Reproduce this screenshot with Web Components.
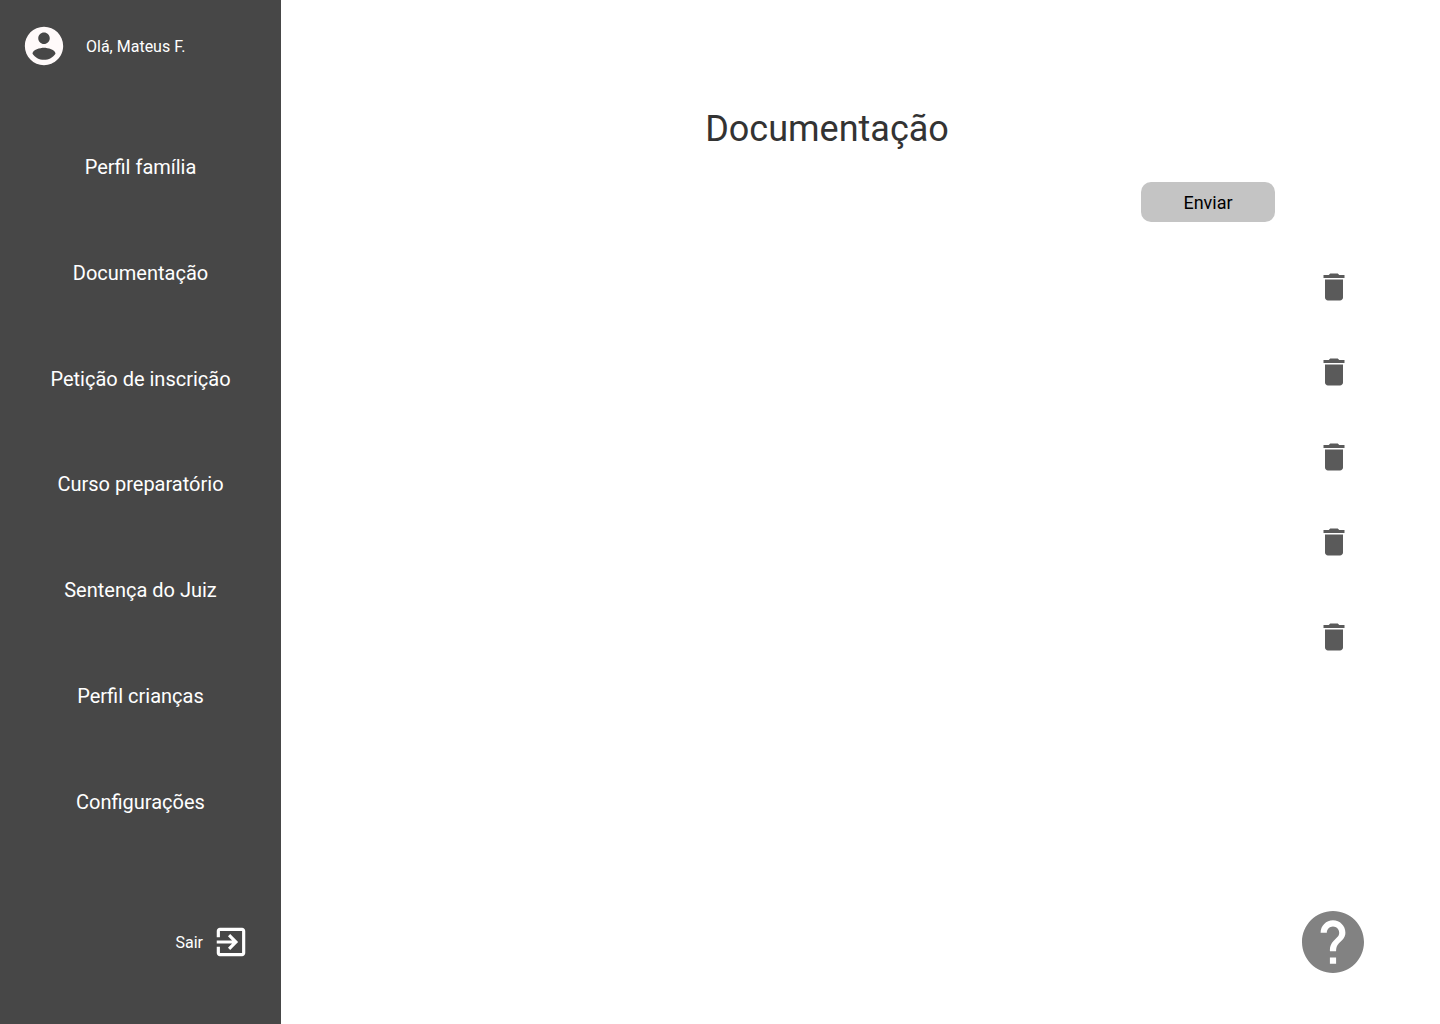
<!DOCTYPE html>
<html lang="pt-BR">
<head>
<meta charset="utf-8">
<title>Documentação</title>
<style>
  body { margin: 0; background: #fff; font-family: Roboto, "Liberation Sans", sans-serif; }
</style>
</head>
<body>
<app-shell>
  <side-bar slot="side" user="Olá, Mateus F.">
    <nav-item>Perfil família</nav-item>
    <nav-item>Documentação</nav-item>
    <nav-item>Petição de inscrição</nav-item>
    <nav-item>Curso preparatório</nav-item>
    <nav-item>Sentença do Juiz</nav-item>
    <nav-item>Perfil crianças</nav-item>
    <nav-item>Configurações</nav-item>
  </side-bar>
  <documents-page heading="Documentação">
    <send-button slot="action">Enviar</send-button>
    <document-row></document-row>
    <document-row></document-row>
    <document-row></document-row>
    <document-row></document-row>
    <document-row last></document-row>
    <help-button slot="help"></help-button>
  </documents-page>
</app-shell>
<script>
class BaseElement extends HTMLElement {
  constructor() {
    super();
    this.attachShadow({ mode: 'open' }).innerHTML =
      '<style>*{box-sizing:border-box}button{font:inherit;border:0;padding:0;background:none;cursor:pointer}a{color:inherit;text-decoration:none}svg{display:block;fill:currentColor}</style>' + this.template();
  }
}

customElements.define('app-shell', class extends BaseElement {
  template() {
    return `<style>
      :host { display: grid; grid-template-columns: 281px 1fr; min-height: 100vh; }
    </style><slot name="side"></slot><slot></slot>`;
  }
});

customElements.define('side-bar', class extends BaseElement {
  template() {
    return `<style>
      :host { display: flex; flex-direction: column; background: #474747; color: #fff; }
      header { display: flex; align-items: center; gap: 19px; height: 92px; padding-left: 21px; font-size: 16px; line-height: 20px; }
      header svg { width: 46px; height: 46px; color: #fffafa; }
      span { padding-top: 2px; }
      nav { flex: 1; display: flex; flex-direction: column; justify-content: space-between; padding: 63px 0 109px; }
      footer { display: flex; justify-content: flex-end; padding: 0 31px 63px 0; }
      a { display: flex; align-items: center; gap: 9px; font-size: 16px; line-height: 20px; }
      a svg { width: 38px; height: 38px; }
    </style>
    <header>
      <svg viewBox="0 0 24 24" aria-hidden="true"><path d="M12 2C6.48 2 2 6.48 2 12s4.480 10 10 10 10-4.480 10-10S17.520 2 12 2zm0 3c1.660 0 3 1.340 3 3s-1.340 3-3 3-3-1.340-3-3 1.340-3 3-3zm0 14.200c-2.500 0-4.710-1.280-6-3.220.030-1.990 4-3.080 6-3.080 1.990 0 5.970 1.090 6 3.080-1.290 1.940-3.500 3.220-6 3.220z"/></svg>
      <span id="user"></span>
    </header>
    <nav><slot></slot></nav>
    <footer><a href="#sair"><span>Sair</span>
      <svg viewBox="0 0 24 24" aria-hidden="true"><path d="M10.090 15.590L11.500 17l5-5-5-5-1.410 1.410L12.670 11H3v2h9.670l-2.580 2.590zM19 3H5c-1.110 0-2 .9-2 2v4h2V5h14v14H5v-4H3v4c0 1.100.890 2 2 2h14c1.100 0 2-.9 2-2V5c0-1.100-.9-2-2-2z"/></svg>
    </a></footer>`;
  }
  connectedCallback() { this.shadowRoot.getElementById('user').textContent = this.getAttribute('user'); }
});

customElements.define('nav-item', class extends BaseElement {
  template() {
    return `<style>
      :host { display: block; text-align: center; font-size: 20px; line-height: 24px; }
      a { display: block; }
    </style><a href="#"><slot></slot></a>`;
  }
});

customElements.define('documents-page', class extends BaseElement {
  template() {
    return `<style>
      :host { display: block; }
      main { display: flex; flex-direction: column; min-height: 100%; padding: 107px 67px 51px 0; }
      h1 { margin: 0 0 31px; text-align: center; color: #333; font-size: 36px; font-weight: 400; line-height: 44px; }
      .action { display: flex; justify-content: flex-end; padding-right: 98px; margin-bottom: 47px; }
      .rows { display: flex; flex-direction: column; gap: 49px; padding-right: 21px; }
      .help { display: flex; justify-content: flex-end; margin-top: auto; padding-right: 9px; }
    </style>
    <main>
      <h1></h1>
      <div class="action"><slot name="action"></slot></div>
      <div class="rows"><slot></slot></div>
      <div class="help"><slot name="help"></slot></div>
    </main>`;
  }
  connectedCallback() { this.shadowRoot.querySelector('h1').textContent = this.getAttribute('heading'); }
});

customElements.define('send-button', class extends BaseElement {
  template() {
    return `<style>
      :host { display: block; }
      button { display: block; width: 134px; height: 40px; padding-top: 2px; border-radius: 10px; background: #c4c4c4; color: #000; font-size: 18px; line-height: 22px; }
    </style><button type="button"><slot></slot></button>`;
  }
});

customElements.define('document-row', class extends BaseElement {
  template() {
    return `<style>
      :host { display: flex; justify-content: flex-end; }
      :host([last]) { padding-top: 10px; }
      button { color: #5a5a5a; }
      svg { width: 36px; height: 36px; }
    </style><button type="button" aria-label="Excluir">
      <svg viewBox="0 0 24 24" aria-hidden="true"><path d="M6 19c0 1.100.9 2 2 2h8c1.100 0 2-.9 2-2V7H6v12zM19 4h-3.500l-1-1h-5l-1 1H5v2h14V4z"/></svg>
    </button>`;
  }
});

customElements.define('help-button', class extends BaseElement {
  template() {
    return `<style>
      :host { display: block; }
      button { display: block; color: #828282; }
      svg { width: 62px; height: 62px; }
    </style><button type="button" aria-label="Ajuda">
      <svg viewBox="2 2 20 20" aria-hidden="true"><path d="M12 2C6.480 2 2 6.480 2 12s4.480 10 10 10 10-4.480 10-10S17.520 2 12 2zm1 17h-2v-2h2v2zm2.070-7.750l-.9.920C13.450 12.900 13 13.500 13 15h-2v-.5c0-1.100.450-2.100 1.170-2.830l1.240-1.260c.370-.360.590-.860.590-1.410 0-1.100-.9-2-2-2s-2 .9-2 2H8c0-2.210 1.790-4 4-4s4 1.790 4 4c0 .880-.360 1.680-.930 2.250z"/></svg>
    </button>`;
  }
});
</script>
</body>
</html>
